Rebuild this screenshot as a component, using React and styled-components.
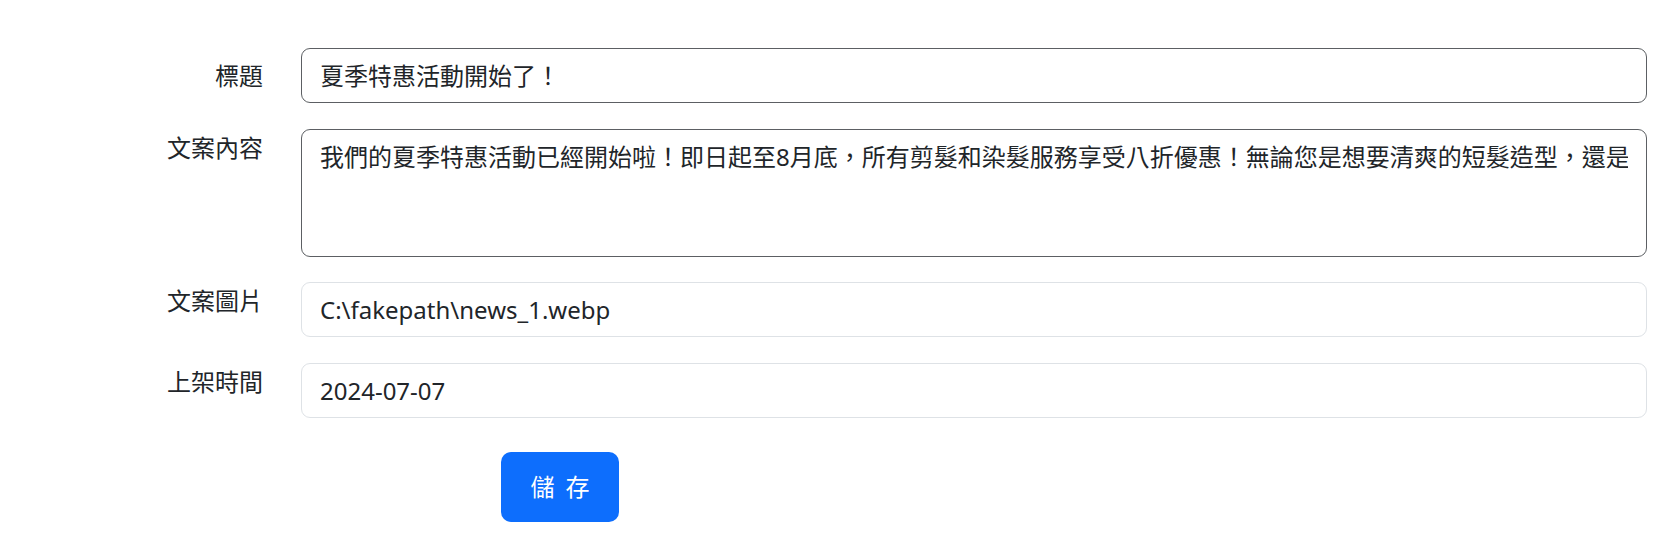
import React from 'react';
import styled, { createGlobalStyle } from 'styled-components';

const GlobalStyle = createGlobalStyle`
 html, body {
  margin: 0;
  padding: 0;
  background: #fff;
 }
 body {
  font-family: "Segoe UI", "Noto Sans", "Noto Sans CJK TC", sans-serif;
  color: #212529;
 }
`;

const Form = styled.form`
 padding: 48px 25px 0 0;
 display: grid;
 grid-template-columns: 263px minmax(0, 1fr);
 column-gap: 38px;
 row-gap: 25.5px;
`;

const Label = styled.label`
 font-size: 24px;
 line-height: 36px;
 text-align: right;
 color: #212529;
 padding-top: ${p => (p.centered ? '0' : '1px')};
 align-self: ${p => (p.centered ? 'center' : 'start')};
`;

const Field = styled.div`
 box-sizing: border-box;
 min-width: 0;
 height: ${p => p.h || 55}px;
 padding: 9px 18px;
 border: 1px solid ${p => (p.dark ? '#5c5f63' : '#dee2e6')};
 border-radius: 9px;
 font-size: 24px;
 line-height: 36px;
 color: #212529;
 background: #fff;
`;

// text that runs past the right edge is cut at the content box
const Clip = styled.div`
 overflow: hidden;
 white-space: nowrap;
`;

const Actions = styled.div`
 grid-column: 2;
 padding: 9px 0 0 200px;
`;

const SaveButton = styled.button`
 box-sizing: border-box;
 width: 118px;
 height: 70px;
 border: none;
 border-radius: 10px;
 background: #0d6efd;
 color: #fff;
 font-family: inherit;
 font-size: 24px;
 line-height: 36px;
 word-spacing: 5px;
 cursor: pointer;
 &:hover {
  background: #0b5ed7;
 }
`;

const fields = [
 { label: '標題', value: '夏季特惠活動開始了！', dark: true, centered: true },
 {
  label: '文案內容',
  value: '我們的夏季特惠活動已經開始啦！即日起至8月底，所有剪髮和染髮服務享受八折優惠！無論您是想要清爽的短髮造型，還是充滿活力的夏日髮色，我們的專業設計師都能為您打造。',
  dark: true,
  h: 128,
 },
 { label: '文案圖片', value: 'C:\\fakepath\\news_1.webp' },
 { label: '上架時間', value: '2024-07-07' },
];

export default function App() {
 return (
  <>
   <GlobalStyle />
   <Form onSubmit={e => e.preventDefault()}>
    {fields.map((f, i) => (
     <React.Fragment key={i}>
      <Label centered={f.centered}>{f.label}</Label>
      <Field dark={f.dark} h={f.h}>
       <Clip>{f.value}</Clip>
      </Field>
     </React.Fragment>
    ))}
    <Actions>
     <SaveButton type="submit">儲 存</SaveButton>
    </Actions>
   </Form>
  </>
 );
}
